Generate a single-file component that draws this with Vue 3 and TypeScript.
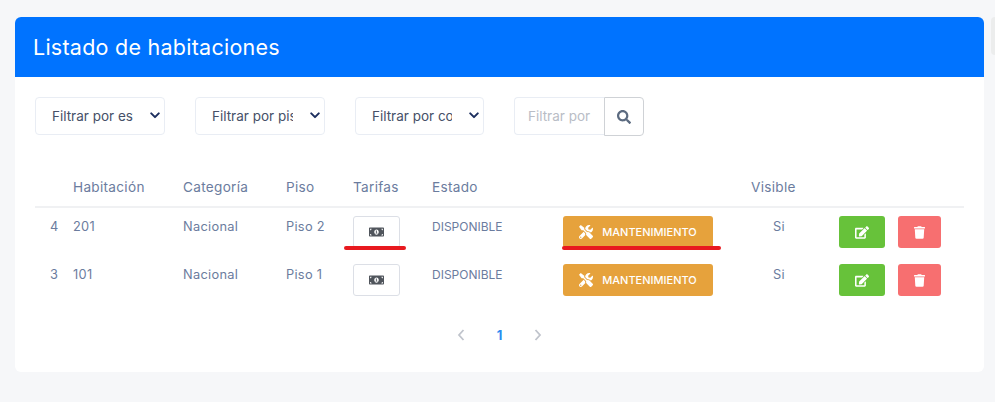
<template>
  <div class="page">
    <div class="card">
      <div class="card-head">Listado de habitaciones</div>
      <div class="card-body">
        <div class="filters">
          <div v-for="f in filters" :key="f" class="select-wrap">
            <select class="filter-select" :aria-label="f">
              <option>{{ f }}</option>
            </select>
            <svg class="chevron" viewBox="0 0 12 8" aria-hidden="true">
              <path d="M1.5 1.5 6 6l4.5-4.5" fill="none" stroke="currentColor" stroke-width="2.4" stroke-linecap="round" stroke-linejoin="round" />
            </svg>
          </div>
          <div class="search">
            <input class="search-input" type="text" placeholder="Filtrar por nombre" />
            <button type="button" class="search-btn" aria-label="Buscar">
              <svg viewBox="0 0 512 512" aria-hidden="true"><path :d="icons.search" /></svg>
            </button>
          </div>
        </div>

        <div class="table">
          <div class="row head">
            <span></span>
            <span>Habitación</span>
            <span>Categoría</span>
            <span>Piso</span>
            <span>Tarifas</span>
            <span>Estado</span>
            <span></span>
            <span>Visible</span>
            <span></span>
          </div>
          <div v-for="r in rooms" :key="r.id" class="row">
            <span class="num">{{ r.id }}</span>
            <span>{{ r.room }}</span>
            <span>{{ r.category }}</span>
            <span>{{ r.floor }}</span>
            <span>
              <button type="button" class="btn-rate" aria-label="Tarifas">
                <svg viewBox="0 0 640 512" aria-hidden="true"><path :d="icons.money" /></svg>
              </button>
            </span>
            <span class="status">{{ r.status }}</span>
            <span>
              <button type="button" class="btn btn-maint">
                <svg viewBox="0 0 512 512" aria-hidden="true"><path :d="icons.tools" /></svg>
                MANTENIMIENTO
              </button>
            </span>
            <span class="visible">{{ r.visible }}</span>
            <span class="actions">
              <button type="button" class="btn btn-edit" aria-label="Editar">
                <svg viewBox="0 0 576 512" aria-hidden="true"><path :d="icons.edit" /></svg>
              </button>
              <button type="button" class="btn btn-del" aria-label="Eliminar">
                <svg viewBox="0 0 448 512" aria-hidden="true"><path :d="icons.trash" /></svg>
              </button>
            </span>
          </div>
        </div>

        <div class="pager">
          <svg viewBox="0 0 10 14" aria-hidden="true"><path d="M7.5 2 3 7l4.5 5" /></svg>
          <span class="page-num">1</span>
          <svg viewBox="0 0 10 14" aria-hidden="true"><path d="M2.5 2 7 7l-4.5 5" /></svg>
        </div>
      </div>
    </div>
    <i class="mark mark-a"></i>
    <i class="mark mark-b"></i>
    <i class="side-tab"></i>
  </div>
</template>

<script setup lang="ts">
const filters = ['Filtrar por estado', 'Filtrar por piso', 'Filtrar por condición']

const rooms = [
  { id: 4, room: '201', category: 'Nacional', floor: 'Piso 2', status: 'DISPONIBLE', visible: 'Si' },
  { id: 3, room: '101', category: 'Nacional', floor: 'Piso 1', status: 'DISPONIBLE', visible: 'Si' },
]

const icons = {
  search: 'M505 442.7L405.3 343c-4.5-4.5-10.6-7-17-7H372c27.6-35.3 44-79.7 44-128C416 93.1 322.9 0 208 0S0 93.1 0 208s93.1 208 208 208c48.3 0 92.7-16.4 128-44v16.3c0 6.4 2.5 12.5 7 17l99.7 99.7c9.4 9.4 24.6 9.4 33.9 0l28.3-28.3c9.4-9.4 9.4-24.6.1-34zM208 336c-70.7 0-128-57.2-128-128 0-70.7 57.2-128 128-128 70.7 0 128 57.2 128 128 0 70.7-57.2 128-128 128z',
  money: 'M352 288h-16v-88c0-4.42-3.58-8-8-8h-13.58c-4.74 0-9.37 1.4-13.31 4.03l-15.33 10.22a7.994 7.994 0 0 0-2.22 11.09l8.88 13.31a7.994 7.994 0 0 0 11.09 2.22l.47-.31V288h-16c-4.42 0-8 3.58-8 8v16c0 4.42 3.58 8 8 8h64c4.42 0 8-3.58 8-8v-16c0-4.42-3.58-8-8-8zM608 64H32C14.33 64 0 78.33 0 96v320c0 17.67 14.33 32 32 32h576c17.67 0 32-14.33 32-32V96c0-17.67-14.33-32-32-32zM48 400v-64c35.35 0 64 28.65 64 64H48zm0-224v-64h64c0 35.35-28.65 64-64 64zm272 192c-53.02 0-96-50.15-96-112 0-61.86 42.98-112 96-112s96 50.14 96 112c0 61.87-43 112-96 112zm272 32h-64c0-35.35 28.65-64 64-64v64zm0-224c-35.35 0-64-28.65-64-64h64v64z',
  tools: 'M501.1 395.7L384 278.6c-23.1-23.1-57.6-27.6-85.4-13.9L192 158.1V96L64 0 0 64l96 128h62.1l106.6 106.6c-13.6 27.8-9.2 62.3 13.9 85.4l117.1 117.1c14.6 14.6 38.2 14.6 52.7 0l52.7-52.7c14.5-14.6 14.5-38.2 0-52.7zM331.7 225c28.3 0 54.9 11 74.9 31l19.4 19.4c15.8-6.9 30.8-16.5 43.8-29.5 37.1-37.1 49.7-89.3 37.9-136.7-2.2-9-13.5-12.1-20.1-5.5l-74.4 74.4-67.9-11.3L334 98.9l74.4-74.4c6.6-6.6 3.4-17.9-5.7-20.2-47.4-11.7-99.6.9-136.6 37.9-28.5 28.5-41.9 66.1-41.2 103.6l82.1 82.1c8.1-1.9 16.5-2.9 24.7-2.9zm-103.9 82l-56.7-56.7L18.7 402.8c-25 25-25 65.5 0 90.5s65.5 25 90.5 0l123.6-123.6c-7.6-19.9-9.9-41.6-5-62.7zM64 472c-13.2 0-24-10.8-24-24 0-13.3 10.7-24 24-24s24 10.7 24 24c0 13.2-10.7 24-24 24z',
  edit: 'M402.6 83.2l90.2 90.2c3.8 3.8 3.8 10 0 13.8L274.4 405.6l-92.8 10.3c-12.4 1.4-22.9-9.1-21.5-21.5l10.3-92.8L388.8 83.2c3.8-3.8 10-3.8 13.8 0zm162-22.9l-48.8-48.8c-15.2-15.2-39.9-15.2-55.2 0l-35.4 35.4c-3.8 3.8-3.8 10 0 13.8l90.2 90.2c3.8 3.8 10 3.8 13.8 0l35.4-35.4c15.2-15.3 15.2-40 0-55.2zM384 346.2V448H64V128h229.8c3.2 0 6.2-1.3 8.5-3.5l40-40c7.6-7.6 2.2-20.5-8.5-20.5H48C21.5 64 0 85.5 0 112v352c0 26.5 21.5 48 48 48h352c26.5 0 48-21.5 48-48V306.2c0-10.7-12.9-16-20.5-8.5l-40 40c-2.2 2.3-3.5 5.3-3.5 8.5z',
  trash: 'M432 32H312l-9.4-18.7A24 24 0 0 0 281.1 0H166.8a23.72 23.72 0 0 0-21.4 13.3L136 32H16A16 16 0 0 0 0 48v32a16 16 0 0 0 16 16h416a16 16 0 0 0 16-16V48a16 16 0 0 0-16-16zM53.2 467a48 48 0 0 0 47.9 45h245.8a48 48 0 0 0 47.9-45L416 128H32z',
}
</script>

<style>
html, body { margin: 0; background: #f6f7f9; }
</style>

<style scoped>
.page {
  position: relative; width: 995px; height: 402px; overflow: hidden;
  padding: 17px 11px 0 15px; box-sizing: border-box;
  background: #f6f7f9; font-family: Inter, "Open Sans", sans-serif;
}
.card { height: 355px; background: #fff; border-radius: 6px; overflow: hidden; }
.card-head {
  height: 60px; padding-left: 18px; background: #0073ff; color: #fff;
  font-size: 21.5px; line-height: 60px; letter-spacing: 0.25px;
}
.card-body { padding: 20px 20px 0; }

.filters { display: flex; height: 38px; gap: 30px; }
.select-wrap { position: relative; width: 130px; }
.select-wrap:nth-child(3) { width: 129px; }
.filter-select {
  width: 100%; height: 38px; padding: 0 31px 0 16px; box-sizing: border-box;
  appearance: none; background: #fff; border: 1px solid #e9edf4; border-radius: 4px;
  color: #465068; font: 13.5px Inter, sans-serif; outline: none;
}
.chevron {
  position: absolute; top: 15px; right: 5px; width: 10px; height: 7px;
  color: #1d2f5f; pointer-events: none;
}
.search { display: flex; width: 130px; }
.search-input {
  width: 90px; height: 38px; padding: 0 12px 0 13px; box-sizing: border-box;
  border: 1px solid #e9edf4; border-right: 0; border-radius: 4px 0 0 4px;
  font: 13.5px Inter, sans-serif; outline: none;
}
.search-input::placeholder { color: #b9bdc6; }
.search-btn {
  width: 40px; height: 39px; padding: 0; display: flex; align-items: center; justify-content: center;
  background: #fff; border: 1px solid #cfd2d6; border-radius: 0 4px 4px 0;
}
.search-btn svg { width: 14px; height: 14px; fill: #5c6b80; }

.table { margin-top: 34px; }
.row {
  display: grid; height: 48px; align-items: start;
  grid-template-columns: 38px 110px 103px 67px 79px 131px 188px 88px 125px;
  color: #6b7c9e; font-size: 12.8px; line-height: 20px; letter-spacing: 0.3px;
}
.row > span { padding-top: 9px; }
.row.head { height: 39px; border-bottom: 2px solid #f0f1f3; box-sizing: border-box; font-size: 13.6px; }
.row.head > span { padding-top: 8px; }
.num { padding-left: 15px; }
.status { font-size: 12px; letter-spacing: 0; }
.visible { padding-left: 22px; }
.row button { margin-top: -1px; }

.btn-rate {
  width: 47px; height: 32px; padding: 0; display: flex; align-items: center; justify-content: center;
  background: #fff; border: 1px solid #dcdfe6; border-radius: 3px;
}
.btn-rate svg { width: 15px; height: 12px; fill: #50555c; }
.btn {
  height: 32px; padding: 0; display: flex; align-items: center; justify-content: center;
  border: 0; border-radius: 3px; color: #fff;
}
.btn-maint {
  width: 150px; gap: 9px; background: #e6a23c; font: 500 11px Inter, sans-serif;
}
.btn-maint svg { width: 14px; height: 14px; fill: #fff; }
.actions { display: flex; gap: 13px; }
.btn-edit { width: 46px; background: #67c23a; }
.btn-edit svg { width: 14px; height: 13px; fill: #fff; }
.btn-del { width: 43px; background: #f76f70; }
.btn-del svg { width: 11px; height: 13px; fill: #fff; }

.pager { display: flex; justify-content: center; align-items: center; gap: 31px; margin-top: 19px; height: 24px; }
.pager svg { width: 10px; height: 14px; fill: none; stroke: #c0c4cc; stroke-width: 1.8; }
.page-num { color: #2d8cf0; font-size: 13px; font-weight: 700; }

.mark { position: absolute; height: 4px; background: #e8191f; border-radius: 2px; }
.mark-a { left: 344px; top: 246px; width: 62px; }
.mark-b { left: 562px; top: 246px; width: 159px; }
.side-tab {
  position: absolute; left: 991px; top: 17px; width: 8px; height: 38px;
  background: #eceded; border-radius: 4px;
}
</style>
